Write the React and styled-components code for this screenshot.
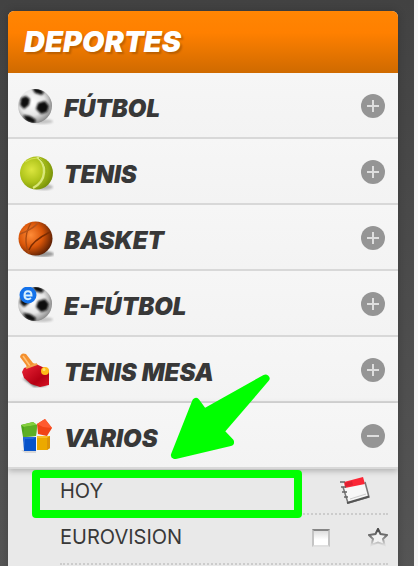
import React, { useState } from "react";
import styled, { createGlobalStyle } from "styled-components";

const GlobalStyle = createGlobalStyle`
  * { box-sizing: border-box; }
  body {
    margin: 0;
    background: #f7f7f7;
    font-family: Inter, "Liberation Sans", sans-serif;
    color: #383838;
    overflow: hidden;
  }
`;

const Page = styled.div`
  min-height: 100vh;
  margin-right: 4px;
  padding: 11px 16px 0 8px;
  background: linear-gradient(#424242, #555555);
`;

const Panel = styled.nav`
  border-radius: 6px 6px 0 0;
  overflow: hidden;
  background: #e9e9e9;
  box-shadow: 0 0 8px rgba(0, 0, 0, 0.2);
`;

const Header = styled.h1`
  display: flex;
  align-items: center;
  height: 62px;
  margin: 0;
  padding: 0 16px 2px;
  background: linear-gradient(#ff8503, #ff8000 35%, #cf6a00);
  color: #ffffff;
  font-size: 29px;
  font-style: italic;
  font-weight: 900;
  text-shadow: 2px 2px 2px rgba(0, 0, 0, 0.2);
`;

const List = styled.ul`
  list-style: none;
  margin: 0;
  padding: 0;
`;

const SportItem = styled.li`
  position: relative;
`;

const SportButton = styled.button`
  position: relative;
  display: flex;
  align-items: center;
  gap: 10px;
  width: 100%;
  height: 66px;
  padding: 4px 12px 0 10px;
  border: 0;
  border-bottom: 2px solid #d8d8d8;
  background: linear-gradient(#f6f6f6, #f3f3f3);
  box-shadow: ${({ $open }) => ($open ? "0 2px 6px rgba(0, 0, 0, 0.25)" : "none")};
  color: inherit;
  font: italic 900 24px/30px Inter, "Liberation Sans", sans-serif;
  text-align: left;
  cursor: pointer;
`;

const SportName = styled.span`
  flex: 1;
  padding-top: 4px;
`;

const SportIcon = styled.svg`
  width: 36px;
  height: 36px;
  flex: none;
`;

const ToggleIcon = styled.svg`
  width: 26px;
  height: 26px;
  flex: none;
`;

const SubList = styled(List)`
  padding: 0 10px 8px 52px;
`;

const SubItem = styled.li`
  position: relative;
  display: flex;
  align-items: center;
  height: ${({ $tall }) => ($tall ? 50 : 46)}px;
  padding-bottom: ${({ $tall }) => ($tall ? 4 : 0)}px;
  border-bottom: 2px dotted #cccccc;
  font-size: 20px;
  line-height: 24px;
`;

const SubLink = styled.a`
  flex: 1;
  color: inherit;
  text-decoration: none;
`;

const SubLabel = styled.label`
  flex: 1;
`;

const IconButton = styled.button`
  display: flex;
  padding: 0;
  margin-right: ${({ $inset }) => ($inset ? 18 : 0)}px;
  border: 0;
  background: none;
  cursor: pointer;
`;

const Check = styled.input`
  appearance: none;
  width: 18px;
  height: 18px;
  margin: 2px 38px 0 0;
  border: 2px solid #c4c4c4;
  border-top-color: #858585;
  border-bottom-color: #e0e0e0;
  background: ${({ checked }) => (checked ? "#8fbf8f" : "linear-gradient(#dedede, #ffffff 60%)")};
`;

const Highlight = styled.span`
  position: absolute;
  inset: 1px 86px -5px -28px;
  border: 8px solid #00ff00;
  border-radius: 4px;
  pointer-events: none;
`;

const Pointer = styled.svg`
  position: absolute;
  left: 162px;
  top: -30px;
  width: 102px;
  height: 88px;
  z-index: 1;
  pointer-events: none;
`;

function SoccerBall({ electronic }) {
  const id = electronic ? "eball" : "ball";
  return (
    <SportIcon viewBox="0 0 36 36" aria-hidden="true">
      <defs>
        <radialGradient id={id} cx=".42" cy=".4" r=".62">
          <stop offset="0" stopColor="#fff" />
          <stop offset=".6" stopColor="#e6e6e6" />
          <stop offset="1" stopColor="#8d8d8d" />
        </radialGradient>
        <clipPath id={id + "c"}><circle cx="17" cy="17" r="17" /></clipPath>
        <filter id={id + "s"}><feGaussianBlur stdDeviation="1.2" /></filter>
        <filter id={id + "p"} x="-20%" y="-20%" width="140%" height="140%"><feGaussianBlur stdDeviation="1" /></filter>
      </defs>
      <ellipse cx="24" cy="32.5" rx="11" ry="2.5" fill="#c4c4c4" filter={`url(#${id}s)`} />
      <circle cx="17" cy="17" r="17" fill={`url(#${id})`} />
      <g clipPath={`url(#${id}c)`}>
        <g filter={`url(#${id}p)`} fill="#101010">
          <path d="M14-1 21-1 26 3 24 6 17 4Z" />
          <path d="M3 9 8 7 12 10 11 16 6 20 2 16Z" />
          <path d="M20 14 27 12 31 17 29 23 23 25 18 20Z" />
          <path d="M5 26 12 27 18 31 16 35 8 32Z" />
          <path d="M32 8 36 14 34 20Z" fill="#888" />
        </g>
      </g>
      {electronic && (
        <g>
          <circle cx="10" cy="8" r="8.5" fill="#1472ea" />
          <path d="M6.5 8.5H13.5C13.5 2.8 6.5 2.8 6.5 8.5C6.5 12.8 10.8 12.8 13 11" fill="none" stroke="#d8f1ff" strokeWidth="2" />
        </g>
      )}
    </SportIcon>
  );
}

function TennisBall() {
  return (
    <SportIcon viewBox="0 0 36 36" aria-hidden="true">
      <defs>
        <radialGradient id="tennis" cx=".35" cy=".4" r=".68">
          <stop offset="0" stopColor="#dce63f" />
          <stop offset=".55" stopColor="#aec31a" />
          <stop offset="1" stopColor="#758f08" />
        </radialGradient>
        <filter id="tennisShadow"><feGaussianBlur stdDeviation="1" /></filter>
        <filter id="tennisSeam" x="-20%" y="-20%" width="140%" height="140%"><feGaussianBlur stdDeviation=".5" /></filter>
      </defs>
      <ellipse cx="26" cy="32" rx="9" ry="3" fill="#b8b8b8" filter="url(#tennisShadow)" />
      <circle cx="18.5" cy="18" r="16.5" fill="url(#tennis)" />
      <g fill="none" filter="url(#tennisSeam)">
        <path d="M19 2C29 9 29 26 15 33" stroke="#d9e779" strokeWidth="2.4" />
        <path d="M21 3C31 11 31 24 20 32" stroke="#92ad18" />
        <path d="M7 7Q13 3 19 3" stroke="#d3df58" />
      </g>
    </SportIcon>
  );
}

function Basketball() {
  return (
    <SportIcon viewBox="0 0 36 36" aria-hidden="true">
      <defs>
        <radialGradient id="basket" cx=".36" cy=".4" r=".65">
          <stop offset="0" stopColor="#ff8c38" />
          <stop offset=".55" stopColor="#d95508" />
          <stop offset="1" stopColor="#602205" />
        </radialGradient>
        <filter id="basketShadow"><feGaussianBlur stdDeviation="1" /></filter>
        <filter id="basketSeam" x="-20%" y="-20%" width="140%" height="140%"><feGaussianBlur stdDeviation=".6" /></filter>
      </defs>
      <ellipse cx="25" cy="33" rx="11" ry="3" fill="#999" filter="url(#basketShadow)" />
      <circle cx="17.5" cy="17.5" r="17" fill="url(#basket)" />
      <g fill="none" stroke="#7b2b05" strokeWidth="1.4" filter="url(#basketSeam)">
        <path d="M13 2Q4 17 11 33" stroke="#a94a12" />
        <path d="M11 29Q14 20 32 11" />
        <path d="M2 13Q15 8 20 2" stroke="#b3521a" />
      </g>
    </SportIcon>
  );
}

function Paddle() {
  return (
    <SportIcon viewBox="0 0 36 36" aria-hidden="true">
      <defs>
        <linearGradient id="paddle" x1="0" y1="0" x2="1" y2="1">
          <stop offset="0" stopColor="#ee2639" />
          <stop offset=".65" stopColor="#b50013" />
          <stop offset="1" stopColor="#d91425" />
        </linearGradient>
        <filter id="paddleShadow"><feGaussianBlur stdDeviation="1" /></filter>
      </defs>
      <path d="M4 25 16 34 29 33 23 29Z" fill="#777" filter="url(#paddleShadow)" />
      <path d="M2 4Q3-1 8 1L15 10 20 12 10 17 8 12Z" fill="#f4902f" />
      <path d="M5 3 12 13" stroke="#ffc277" strokeWidth="1.5" />
      <path d="M6 15 18 11 31 17 31 32 22 34 13 31 6 25 4 19Z" fill="url(#paddle)" />
      <path d="M8 15 19 11" stroke="#f4a44c" strokeWidth="2" />
      <circle cx="27" cy="18" r="4" fill="#ffba19" />
      <circle cx="26" cy="16.5" r="1.5" fill="#ffe36c" />
    </SportIcon>
  );
}

function Cubes() {
  return (
    <SportIcon viewBox="0 0 36 36" aria-hidden="true">
      <path d="M3 31H18V34H7Z" fill="#d8d8d8" />
      <path d="M3 6 15 3 19 6 18 17 5 18Z" fill="#4ca51b" />
      <path d="M3 6 15 3 19 6 6 8Z" fill="#85cf3d" />
      <path d="M6 8 19 6 18 17 5 18Z" fill="#5daf24" />
      <path d="M19 5 27 0 34 9 29 17 20 15Z" fill="#f14316" />
      <path d="M19 5 27 0 34 9 25 8Z" fill="#ff5a30" />
      <path d="M5 18H18V32H6Z" fill="#0753ca" />
      <path d="M5 18H18L15 20H7V29Z" fill="#2468d8" />
      <path d="M19 17 32 17V29L29 31H19Z" fill="#eca900" />
      <path d="M19 17 32 17 29 19H19Z" fill="#f8bd28" />
      <path d="M29 19 32 17V29L29 31Z" fill="#dd9408" />
    </SportIcon>
  );
}

function Toggle({ open }) {
  return (
    <ToggleIcon viewBox="0 0 26 26" aria-hidden="true">
      <circle cx="13" cy="12" r="12" fill="#959595" />
      <path d={open ? "M7 12H19" : "M7 12H19M13 6V18"} stroke="#dedede" strokeWidth="2" />
    </ToggleIcon>
  );
}

function CalendarIcon() {
  return (
    <svg width="30" height="28" viewBox="0 0 30 28" aria-hidden="true">
      <path d="M3 7 23 2 28 20 8 26Z" fill="#f7f7f7" />
      <path d="M4 5 23 0 25 7 5 11Z" fill="#fb2636" />
      <path d="M5 6 12 4 13 8 5 10Z" fill="#e01f30" />
      <path d="M25 5 29 20 8 26 3 10" fill="none" stroke="#777" strokeWidth="1.5" />
      <path d="M7 26 29 19.5" stroke="#555" strokeWidth="2" />
      <path d="M0 5H5M1 10H6M2 15H7M4 20H8" stroke="#666" strokeWidth="1.5" />
      <path d="M10 22 26 17" stroke="#ccc" />
    </svg>
  );
}

function StarIcon() {
  return (
    <svg width="20" height="19" viewBox="0 0 20 19" aria-hidden="true">
      <defs>
        <linearGradient id="star" x1="0" y1="0" x2="0" y2="1">
          <stop offset="0" stopColor="#444" />
          <stop offset=".45" stopColor="#777" />
          <stop offset="1" stopColor="#ddd" />
        </linearGradient>
      </defs>
      <path d="M10 1 12.5 6 19 7 15 11 16.5 17 10 14.5 3.5 17 5 11 1 7 7.5 6Z" fill="#f3f3f3" stroke="url(#star)" strokeWidth="2" />
    </svg>
  );
}

const sports = [
  { name: "FÚTBOL", icon: <SoccerBall /> },
  { name: "TENIS", icon: <TennisBall /> },
  { name: "BASKET", icon: <Basketball /> },
  { name: "E-FÚTBOL", icon: <SoccerBall electronic /> },
  { name: "TENIS MESA", icon: <Paddle /> },
  { name: "VARIOS", icon: <Cubes />, open: true },
];

export default function App() {
  const [checked, setChecked] = useState(false);
  return (
    <>
      <GlobalStyle />
      <Page>
        <Panel aria-label="Deportes">
          <Header>DEPORTES</Header>
          <List>
            {sports.map(({ name, icon, open }) => (
              <SportItem key={name}>
                <SportButton type="button" $open={open} aria-expanded={!!open}>
                  {icon}
                  <SportName>{name}</SportName>
                  <Toggle open={open} />
                </SportButton>
                {open && (
                  <>
                    <Pointer viewBox="170 373 102 88" aria-hidden="true">
                      <path d="M265.5 378.5 204 413 196 402 175 455 230 442 220 431.5Z" fill="#0f0" stroke="#0f0" strokeWidth="8" strokeLinejoin="round" />
                    </Pointer>
                    <SubList>
                      <SubItem>
                        <SubLink href="#hoy">HOY</SubLink>
                        <IconButton type="button" aria-label="Calendario" $inset><CalendarIcon /></IconButton>
                        <Highlight />
                      </SubItem>
                      <SubItem $tall>
                        <SubLabel htmlFor="eurovision">EUROVISION</SubLabel>
                        <Check id="eurovision" type="checkbox" checked={checked} onChange={(e) => setChecked(e.target.checked)} />
                        <IconButton type="button" aria-label="Favorito"><StarIcon /></IconButton>
                      </SubItem>
                    </SubList>
                  </>
                )}
              </SportItem>
            ))}
          </List>
        </Panel>
      </Page>
    </>
  );
}
